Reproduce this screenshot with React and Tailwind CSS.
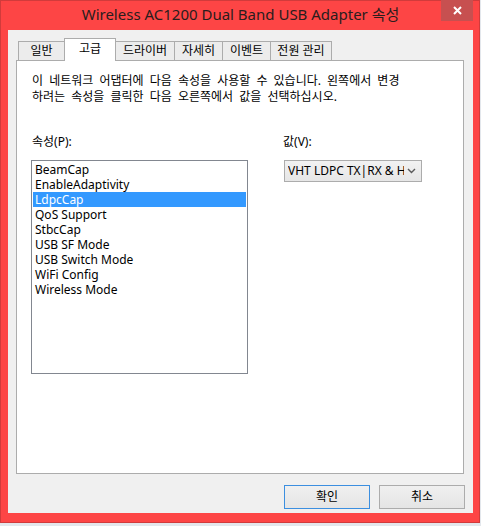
const tabs = [
  { label: "일반", w: "w-[47px]" },
  { label: "고급", w: "w-[52px]", active: true },
  { label: "드라이버", w: "w-[60px]" },
  { label: "자세히", w: "w-[49px]" },
  { label: "이벤트", w: "w-[49px]" },
  { label: "전원 관리", w: "w-[62px]" },
];

const props = [
  "BeamCap",
  "EnableAdaptivity",
  "LdpcCap",
  "QoS Support",
  "StbcCap",
  "USB SF Mode",
  "USB Switch Mode",
  "WiFi Config",
  "Wireless Mode",
];

export default function App() {
  return (
    <div className="w-[481px] h-[526px] bg-[#e3e7ec] font-['Noto_Sans','Noto_Sans_CJK_KR',sans-serif] text-[12px] text-black overflow-hidden">
      <div className="w-[480px] h-[523px] bg-[#fd4545] border border-[#d13b3b] flex flex-col pl-[7px] pr-[6px] pb-[9px]">
        {/* title bar */}
        <div className="relative h-[29px] flex items-center justify-center pb-[2px]">
          <span className="text-[15px] text-[#2a1d1d] leading-none">
            Wireless AC1200 Dual Band USB Adapter 속성
          </span>
          <div className="absolute top-[-1px] right-[0px] w-[32px] h-[21px] bg-[#c75050] flex items-center justify-center">
            <svg width="9" height="9" viewBox="0 0 9 9">
              <path d="M1 1 L8 8 M8 1 L1 8" stroke="#fff" strokeWidth="2" />
            </svg>
          </div>
        </div>

        {/* client */}
        <div className="flex-1 bg-[#f0f0f0] flex flex-col pt-[8px]">
          <div className="flex items-end pl-[10px] h-[22px]">
            {tabs.map((t, i) =>
              t.active ? (
                <div
                  key={t.label}
                  className={`${t.w} h-[23px] -mb-px -ml-px relative z-10 bg-white border border-b-0 border-[#acacac] flex items-center justify-center pb-[2px]`}
                >
                  {t.label}
                </div>
              ) : (
                <div
                  key={t.label}
                  className={`${t.w} h-[19px] ${i > 0 ? "-ml-px" : ""} bg-[#ececec] border border-b-0 border-[#acacac] flex items-center justify-center`}
                >
                  {t.label}
                </div>
              )
            )}
          </div>

          {/* panel */}
          <div className="ml-[8px] w-[448px] h-[414px] bg-white border border-[#acacac] pt-[12px]">
            <div className="pl-[15px] leading-[16px] [word-spacing:3px]">
              <div>이 네트워크 어댑터에 다음 속성을 사용할 수 있습니다. 왼쪽에서 변경</div>
              <div>하려는 속성을 클릭한 다음 오른쪽에서 값을 선택하십시오.</div>
            </div>
            <div className="flex pl-[14px] mt-[29px]">
              <div className="flex flex-col">
                <div className="pl-px leading-[16px] h-[16px]">속성(P):</div>
                <div className="mt-[10px] w-[217px] h-[214px] border border-[#828790] p-px">
                  {props.map((p) => (
                    <div
                      key={p}
                      className={`h-[15px] leading-[15px] pl-[2px] overflow-hidden ${
                        p === "LdpcCap" ? "bg-[#3399ff] text-white" : ""
                      }`}
                    >
                      {p}
                    </div>
                  ))}
                </div>
              </div>
              <div className="flex flex-col ml-[35px]">
                <div className="leading-[16px] h-[16px]">값(V):</div>
                <div className="mt-[10px] ml-px w-[138px] h-[22px] border border-[#acacac] bg-gradient-to-b from-[#f2f2f2] to-[#e6e6e6] flex items-center pl-[3px] pr-[5px]">
                  <span className="flex-1 overflow-hidden whitespace-nowrap w-[116px]">
                    VHT LDPC TX|RX &amp; H
                  </span>
                  <svg width="9" height="6" viewBox="0 0 9 6" className="ml-[3px]">
                    <path d="M1 1 L4.5 4.5 L8 1" stroke="#5a5a5a" strokeWidth="1.4" fill="none" />
                  </svg>
                </div>
              </div>
            </div>
          </div>

          {/* buttons */}
          <div className="flex justify-end gap-[9px] pr-[8px] mt-[11px]">
            <div className="w-[86px] h-[24px] border border-[#3c8fe0] bg-gradient-to-b from-[#f0f0f0] to-[#e5e5e5] flex items-center justify-center">
              확인
            </div>
            <div className="w-[86px] h-[24px] border border-[#acacac] bg-gradient-to-b from-[#f0f0f0] to-[#e5e5e5] flex items-center justify-center">
              취소
            </div>
          </div>
        </div>
      </div>
    </div>
  );
}
